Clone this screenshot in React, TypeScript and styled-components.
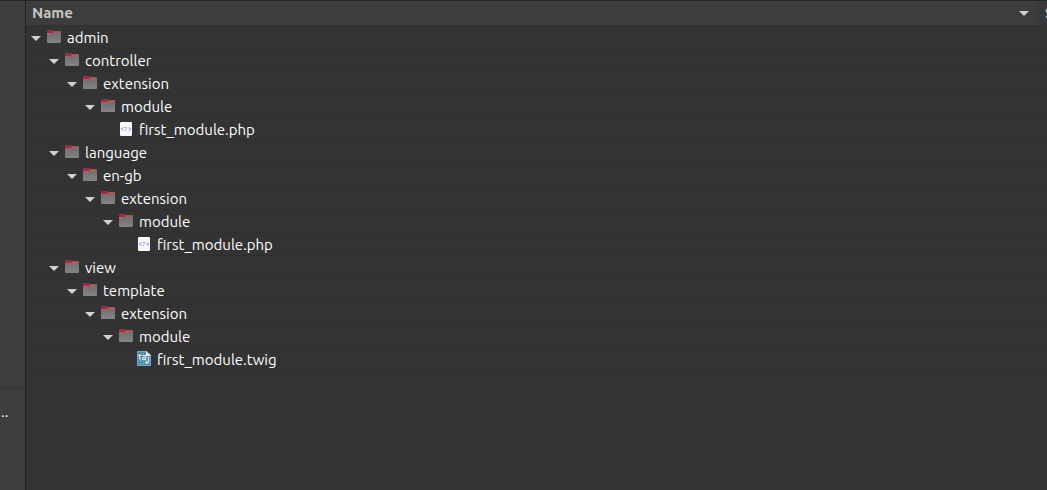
import React from "react";
import styled, { createGlobalStyle } from "styled-components";

const Global = createGlobalStyle`
  * { box-sizing: border-box; }
  body {
    margin: 0;
    background: #333333;
    color: #ffffff;
    font-family: Ubuntu, "Noto Sans", sans-serif;
    font-size: 15px;
    overflow: hidden;
  }
`;

const Window = styled.div`
  display: flex;
  min-height: 100vh;
  border-top: 1px solid #262626;
`;

const Sidebar = styled.aside`
  display: flex;
  flex-direction: column;
  flex: 0 0 26px;
  overflow: hidden;
  background: #3d3d3d;
  border-right: 1px solid #232323;
`;

const SidebarPlaces = styled.div`
  flex: 0 0 388px;
  border-bottom: 1px solid #353535;
`;

const SidebarLink = styled.a`
  padding: 13px 0 0 1px;
  line-height: 20px;
  color: #ffffff;
  text-decoration: none;
`;

const Main = styled.main`
  flex: 1;
  min-width: 0;
`;

const Header = styled.div`
  display: flex;
  height: 25px;
  overflow: hidden;
  background: #3d3d3d;
  border-bottom: 1px solid #303030;
`;

const ColumnButton = styled.button<{ $grow?: boolean }>`
  display: flex;
  align-items: center;
  justify-content: space-between;
  flex: ${(p) => (p.$grow ? "1" : "0 0 9px")};
  min-width: 0;
  padding: ${(p) => (p.$grow ? "0 8px 0 6px" : "0 0 0 7px")};
  overflow: hidden;
  border: 0;
  border-right: ${(p) => (p.$grow ? "1px solid #353535" : "0")};
  background: ${(p) => (p.$grow ? "#3d3d3d" : "#383838")};
  color: #c8c6c3;
  font: bold 15px/20px Ubuntu, "Noto Sans", sans-serif;
`;

const Tree = styled.ul`
  margin: 0;
  padding: 0;
  list-style: none;
`;

const Row = styled.li<{ $depth: number }>`
  display: flex;
  align-items: center;
  height: 23px;
  padding-left: ${(p) => 5 + p.$depth * 18}px;
  border-bottom: 1px solid #2f2f2f;
`;

const Toggle = styled.button`
  display: flex;
  width: 15px;
  height: 16px;
  padding: 3px 0 0;
  align-items: center;
  border: 0;
  background: none;
`;

const Spacer = styled.span`
  width: 15px;
`;

const Label = styled.span`
  margin-left: 5px;
  padding-top: 2px;
  line-height: 20px;
  white-space: nowrap;
`;

const Arrow = () => (
  <svg width="10" height="5" viewBox="0 0 10 5" aria-hidden="true">
    <path d="M0 0H10L5 5Z" fill="#d3d1ce" />
  </svg>
);

const FolderIcon = () => (
  <svg width="16" height="16" viewBox="0 0 16 16" aria-hidden="true">
    <defs>
      <linearGradient id="body" x1="0" y1="0" x2="0" y2="1">
        <stop offset="0" stopColor="#707070" />
        <stop offset="1" stopColor="#848484" />
      </linearGradient>
    </defs>
    <path d="M7 2H14Q15 2 15 3V6H7Z" fill="#c8482f" />
    <path d="M1 2Q1 1 2 1H7L8 2V6H1Z" fill="#a02c48" />
    <path d="M1 5H7L8 4H15V13Q15 14 14 14H2Q1 14 1 13Z" fill="url(#body)" />
    <path d="M1 4H7L8 3H15V4H8L7 5H1Z" fill="#96666b" />
  </svg>
);

const PhpIcon = () => (
  <svg width="16" height="16" viewBox="0 0 16 16" aria-hidden="true">
    <rect x="2" y="1" width="12" height="14" rx="1" fill="#f7f6f8" />
    <g fill="none" stroke="#a697e6" strokeWidth="1">
      <path d="M5.500 6.500L3 8L5.500 9.500M10.500 6.500L13 8L10.500 9.500M6.800 6.500H8.500V7.500L7.500 8.500M7.500 9.300V10" />
    </g>
  </svg>
);

const TwigIcon = () => (
  <svg width="16" height="16" viewBox="0 0 16 16" aria-hidden="true">
    <path d="M1 0H11L15 4V15H1Z" fill="#4f88ac" />
    <path d="M1 3.500H15M1 6.500H15M1 9.500H15M1 12.500H15M4.500 0V15M7.500 0V15M10.500 0V15" stroke="#7fb0cb" strokeOpacity="0.4" fill="none" />
    <path d="M1.500 0.500H10.500L14.500 4.500V14.500H1.500Z" fill="none" stroke="#74a8c4" />
    <path d="M10 0L15 5H10Z" fill="#e6eef2" />
    <path d="M3.500 3V8H5M2 4.500H5.500M6.500 4.500H9.500V9M9 6.500H6.500V8.500H9.500M12.500 6V11.500H9M10.500 10V13" fill="none" stroke="#dcebf3" />
  </svg>
);

type Kind = "folder" | "php" | "twig";

const entries: { name: string; depth: number; kind: Kind }[] = [
  { name: "admin", depth: 0, kind: "folder" },
  { name: "controller", depth: 1, kind: "folder" },
  { name: "extension", depth: 2, kind: "folder" },
  { name: "module", depth: 3, kind: "folder" },
  { name: "first_module.php", depth: 4, kind: "php" },
  { name: "language", depth: 1, kind: "folder" },
  { name: "en-gb", depth: 2, kind: "folder" },
  { name: "extension", depth: 3, kind: "folder" },
  { name: "module", depth: 4, kind: "folder" },
  { name: "first_module.php", depth: 5, kind: "php" },
  { name: "view", depth: 1, kind: "folder" },
  { name: "template", depth: 2, kind: "folder" },
  { name: "extension", depth: 3, kind: "folder" },
  { name: "module", depth: 4, kind: "folder" },
  { name: "first_module.twig", depth: 5, kind: "twig" },
];

const icons = { folder: FolderIcon, php: PhpIcon, twig: TwigIcon };

export default function App() {
  return (
    <Window>
      <Global />
      <Sidebar>
        <SidebarPlaces />
        <SidebarLink href="#other">..</SidebarLink>
      </Sidebar>
      <Main>
        <Header>
          <ColumnButton $grow>
            Name
            <Arrow />
          </ColumnButton>
          <ColumnButton>S</ColumnButton>
        </Header>
        <Tree>
          {entries.map((entry, i) => {
            const Icon = icons[entry.kind];
            return (
              <Row key={i} $depth={entry.depth}>
                {entry.kind === "folder" ? (
                  <Toggle aria-label={`Collapse ${entry.name}`}>
                    <Arrow />
                  </Toggle>
                ) : (
                  <Spacer />
                )}
                <Icon />
                <Label>{entry.name}</Label>
              </Row>
            );
          })}
        </Tree>
      </Main>
    </Window>
  );
}
